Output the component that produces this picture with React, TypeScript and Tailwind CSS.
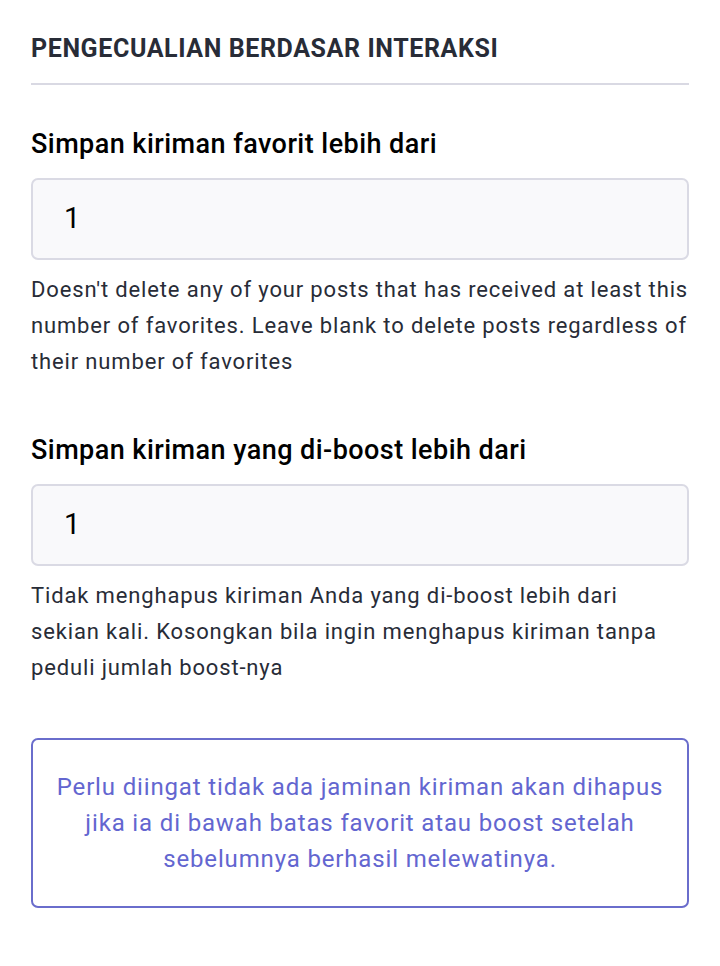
import React from "react";

export default function App() {
  return (
    <div className="w-[720px] h-[966px] bg-white px-[31px] pt-[34px]" style={{ fontFamily: "Roboto, 'Noto Sans', sans-serif" }}>
      <h4 className="text-[25px] font-bold uppercase text-[#282c37] leading-[30px] tracking-[0.6px]">Pengecualian berdasar interaksi</h4>
      <div className="mt-[19px] h-[2px] w-full bg-[#d9d9e3]" />

      <div className="mt-[44px]">
        <label className="block text-[27px] font-medium text-black leading-[30px] tracking-[0.45px]">Simpan kiriman favorit lebih dari</label>
        <div className="mt-[19px] h-[82px] w-full rounded-[7px] border-2 border-[#dadae4] bg-[#f9f9fb] flex items-center px-[31px] text-[29px] text-black">1</div>
        <p className="mt-[12px] text-[22px] leading-[36px] text-[#282c37] tracking-[0.85px]">Doesn't delete any of your posts that has received at least this number of favorites. Leave blank to delete posts regardless of their number of favorites</p>
      </div>

      <div className="mt-[55px]">
        <label className="block text-[27px] font-medium text-black leading-[30px] tracking-[0.45px]">Simpan kiriman yang di-boost lebih dari</label>
        <div className="mt-[19px] h-[82px] w-full rounded-[7px] border-2 border-[#dadae4] bg-[#f9f9fb] flex items-center px-[31px] text-[29px] text-black">1</div>
        <p className="mt-[12px] text-[22px] leading-[36px] text-[#282c37] tracking-[0.85px]">Tidak menghapus kiriman Anda yang di-boost lebih dari sekian kali. Kosongkan bila ingin menghapus kiriman tanpa peduli jumlah boost-nya</p>
      </div>

      <div className="mt-[52px] h-[170px] rounded-[7px] border-2 border-[#6a6dcc] flex items-center justify-center px-[20px]">
        <p className="text-center text-[24px] leading-[36px] text-[#6366d0] tracking-[0.85px]">Perlu diingat tidak ada jaminan kiriman akan dihapus jika ia di bawah batas favorit atau boost setelah sebelumnya berhasil melewatinya.</p>
      </div>
    </div>
  );
}
